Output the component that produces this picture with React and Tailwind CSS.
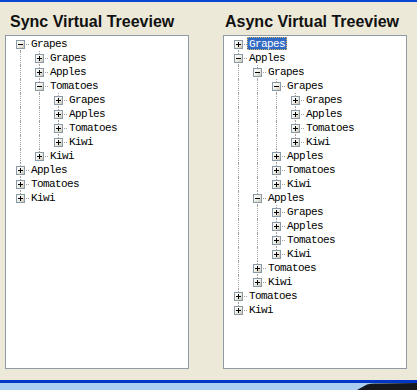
import React from 'react';

const syncTree = [
    {
        label: 'Grapes',
        open: true,
        children: [
            { label: 'Grapes' },
            { label: 'Apples' },
            {
                label: 'Tomatoes',
                open: true,
                children: [{ label: 'Grapes' }, { label: 'Apples' }, { label: 'Tomatoes' }, { label: 'Kiwi' }],
            },
            { label: 'Kiwi' },
        ],
    },
    { label: 'Apples' },
    { label: 'Tomatoes' },
    { label: 'Kiwi' },
];

const asyncTree = [
    { label: 'Grapes', selected: true },
    {
        label: 'Apples',
        open: true,
        children: [
            {
                label: 'Grapes',
                open: true,
                children: [
                    {
                        label: 'Grapes',
                        open: true,
                        children: [{ label: 'Grapes' }, { label: 'Apples' }, { label: 'Tomatoes' }, { label: 'Kiwi' }],
                    },
                    { label: 'Apples' },
                    { label: 'Tomatoes' },
                    { label: 'Kiwi' },
                ],
            },
            {
                label: 'Apples',
                open: true,
                children: [{ label: 'Grapes' }, { label: 'Apples' }, { label: 'Tomatoes' }, { label: 'Kiwi' }],
            },
            { label: 'Tomatoes' },
            { label: 'Kiwi' },
        ],
    },
    { label: 'Tomatoes' },
    { label: 'Kiwi' },
];

// flatten the visible nodes, keeping track of which ancestor columns need a line
const flatten = (nodes, trail = [], out = []) => {
    nodes.forEach((node, i) => {
        const hasNext = i < nodes.length - 1;
        out.push({ ...node, trail, hasNext, first: out.length === 0 });
        if (node.open && node.children) flatten(node.children, [...trail, hasNext], out);
    });
    return out;
};

const Expander = ({ open }) => (
    <svg width="9" height="9" className="absolute left-[6px] top-[3px]">
        <defs>
            <linearGradient id="boxfill" x1="0" y1="0" x2="1" y2="1">
                <stop offset="0" stopColor="#ffffff" />
                <stop offset="0.5" stopColor="#f0efe8" />
                <stop offset="1" stopColor="#c4c1b0" />
            </linearGradient>
        </defs>
        <rect x="0.5" y="0.5" width="8" height="8" fill="url(#boxfill)" stroke="#8a99a6" />
        <path d="M2 4.5h5" stroke="#000" />
        {!open && <path d="M4.5 2v5" stroke="#000" />}
    </svg>
);

const line = 'absolute left-[10px] border-l border-dotted border-[#a0a0a0]';

const TreeRow = ({ row }) => (
    <div className="flex h-[14px]">
        {row.trail.map((cont, j) => (
            <div key={j} className="relative w-[19px] shrink-0">
                {cont && <div className={`${line} top-0 bottom-0`} />}
            </div>
        ))}
        <div className="relative w-[19px] shrink-0">
            {!row.first && <div className={`${line} top-0 h-[7px]`} />}
            {row.hasNext && <div className={`${line} top-[7px] bottom-0`} />}
            <div className="absolute left-[11px] right-0 top-[7px] border-t border-dotted border-[#a0a0a0]" />
            <Expander open={row.open} />
        </div>
        <span
            className={
                row.selected
                    ? 'h-[13px] leading-[14px] px-[2px] bg-[#316AC5] text-white outline-1 outline-dotted outline-offset-[-1px] outline-[#d9b25c]'
                    : 'h-[13px] leading-[14px] px-[2px] text-black'
            }
        >
            {row.label}
        </span>
    </div>
);

const TreePanel = ({ title, tree, titlePad }) => {
    const rows = flatten(tree);
    return (
        <div className="w-[184px] flex flex-col">
            <div className={`h-[33px] pt-[10px] ${titlePad} text-[16px] leading-[20px] font-bold text-[#111] whitespace-nowrap font-['Liberation_Sans',sans-serif]`}>
                {title}
            </div>
            <div className="h-[334px] border border-[#8f9ca6] bg-white pt-[1px] pl-[4px] font-['Liberation_Mono',monospace] text-[11px] tracking-[-0.6px]">
                {rows.map((row, i) => (
                    <TreeRow key={i} row={row} />
                ))}
            </div>
        </div>
    );
};

export default function App() {
    return (
        <div className="relative w-[417px] h-[390px] bg-[#ECE9D8] overflow-hidden flex flex-col">
            <div className="h-[2px] bg-[#0A48D2]" />
            <div className="flex-1 flex pl-[5px] gap-[34px]">
                <TreePanel title="Sync Virtual Treeview" tree={syncTree} titlePad="pl-[5px]" />
                <TreePanel title="Async Virtual Treeview" tree={asyncTree} titlePad="pl-[2px]" />
            </div>
            <div className="h-[10px] flex flex-col">
                <div className="h-[3px] bg-[#0336C6]" />
                <div className="flex-1 bg-[#A9CEF2]" />
            </div>
            <svg width="60" height="7" className="absolute right-0 bottom-0">
                <path d="M0 7 L10 1.5 Q14 0 22 0.5 L60 0 L60 7 Z" fill="#15181c" />
            </svg>
        </div>
    );
}
